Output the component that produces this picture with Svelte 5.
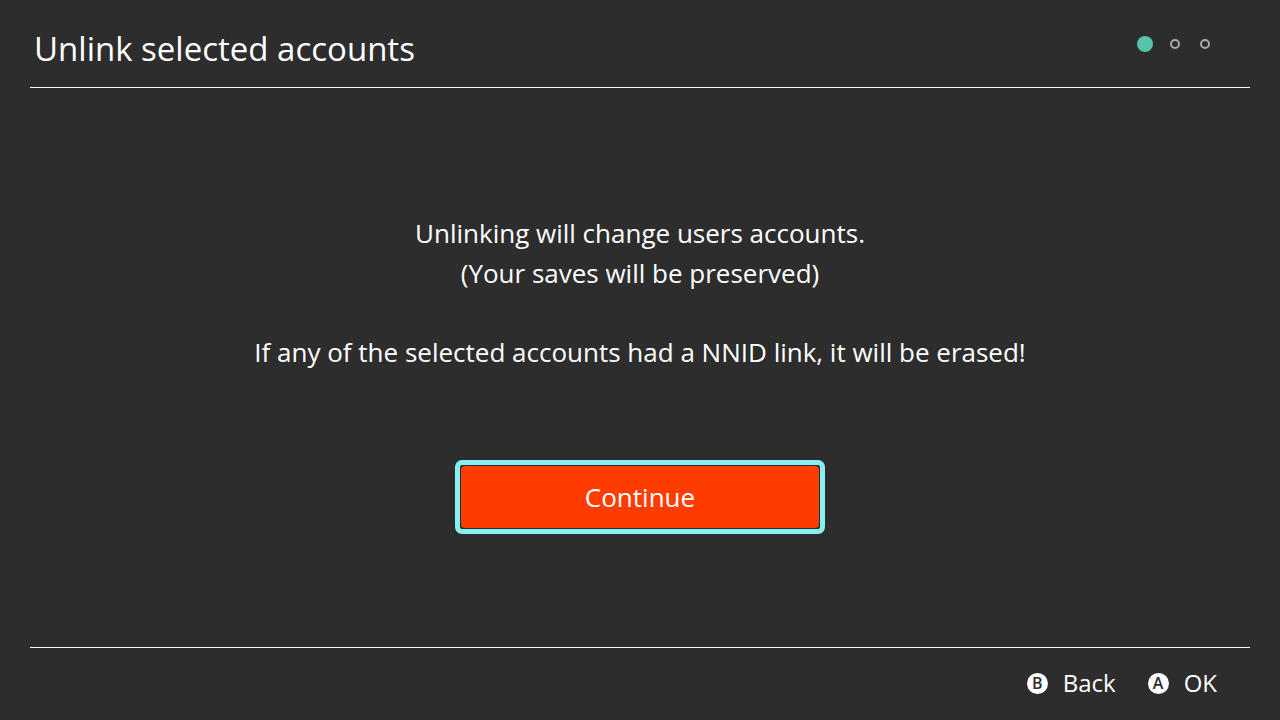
<script>
  const steps = [1, 2, 3];
  const current = 1;
  const hints = [
    { key: 'B', label: 'Back' },
    { key: 'A', label: 'OK' }
  ];
</script>

<div class="screen">
  <header>
    <h1>Unlink selected accounts</h1>
    <ol class="steps" aria-label="Progress">
      {#each steps as step}
        <li class:active={step === current} aria-current={step === current ? 'step' : undefined}></li>
      {/each}
    </ol>
  </header>

  <main>
    <p>Unlinking will change users accounts.<br />(Your saves will be preserved)</p>
    <p>If any of the selected accounts had a NNID link, it will be erased!</p>
    <button class="continue"><span>Continue</span></button>
  </main>

  <footer>
    {#each hints as hint}
      <button class="hint"><span class="key">{hint.key}</span>{hint.label}</button>
    {/each}
  </footer>
</div>

<style>
  :global(body) {
    margin: 0;
    background: #2d2d2d;
  }
  .screen {
    box-sizing: border-box;
    display: flex;
    flex-direction: column;
    min-height: 100vh;
    padding: 0 30px;
    color: #fff;
    font-family: 'Open Sans', 'Noto Sans', sans-serif;
    font-weight: 400;
  }
  header {
    display: flex;
    justify-content: space-between;
    align-items: center;
    box-sizing: border-box;
    height: 88px;
    padding: 10px 37px 0 4px;
    border-bottom: 1px solid #fff;
  }
  h1 {
    margin: 0;
    font-size: 33px;
    font-weight: 400;
    line-height: 48px;
  }
  .steps {
    display: flex;
    align-items: center;
    gap: 14px;
    margin: 0 0 10px;
    padding: 0;
    list-style: none;
  }
  .steps li {
    box-sizing: border-box;
    width: 10px;
    height: 10px;
    margin: 0 3px;
    border: 2px solid #aaa;
    border-radius: 50%;
  }
  .steps li.active {
    width: 16px;
    height: 16px;
    margin: 0;
    border: 0;
    background: #56c4ab;
  }
  main {
    flex: 1;
    display: flex;
    flex-direction: column;
    align-items: center;
    padding-top: 125px;
    text-align: center;
    font-size: 26px;
    line-height: 40px;
  }
  p {
    margin: 0 0 39px;
  }
  button {
    border: 0;
    color: inherit;
    font: inherit;
    cursor: pointer;
  }
  .continue {
    display: flex;
    box-sizing: border-box;
    width: 370px;
    max-width: 100%;
    height: 74px;
    margin-top: 49px;
    padding: 1px;
    border: 5px solid #87f0ee;
    border-radius: 7px;
    background: #24312f;
  }
  .continue span {
    flex: 1;
    display: flex;
    align-items: center;
    justify-content: center;
    align-self: stretch;
    border-radius: 4px;
    background: #ff3c00;
  }
  footer {
    display: flex;
    justify-content: flex-end;
    align-items: center;
    gap: 32px;
    box-sizing: border-box;
    height: 73px;
    padding: 0 33px 2px 0;
    border-top: 1px solid #fff;
    font-size: 24px;
    line-height: 32px;
  }
  .hint {
    display: flex;
    align-items: center;
    gap: 15px;
    padding: 0;
    background: none;
  }
  .key {
    width: 21px;
    height: 21px;
    border-radius: 50%;
    background: #fff;
    color: #2d2d2d;
    font-size: 16px;
    font-weight: 600;
    line-height: 21px;
    text-align: center;
  }
</style>
